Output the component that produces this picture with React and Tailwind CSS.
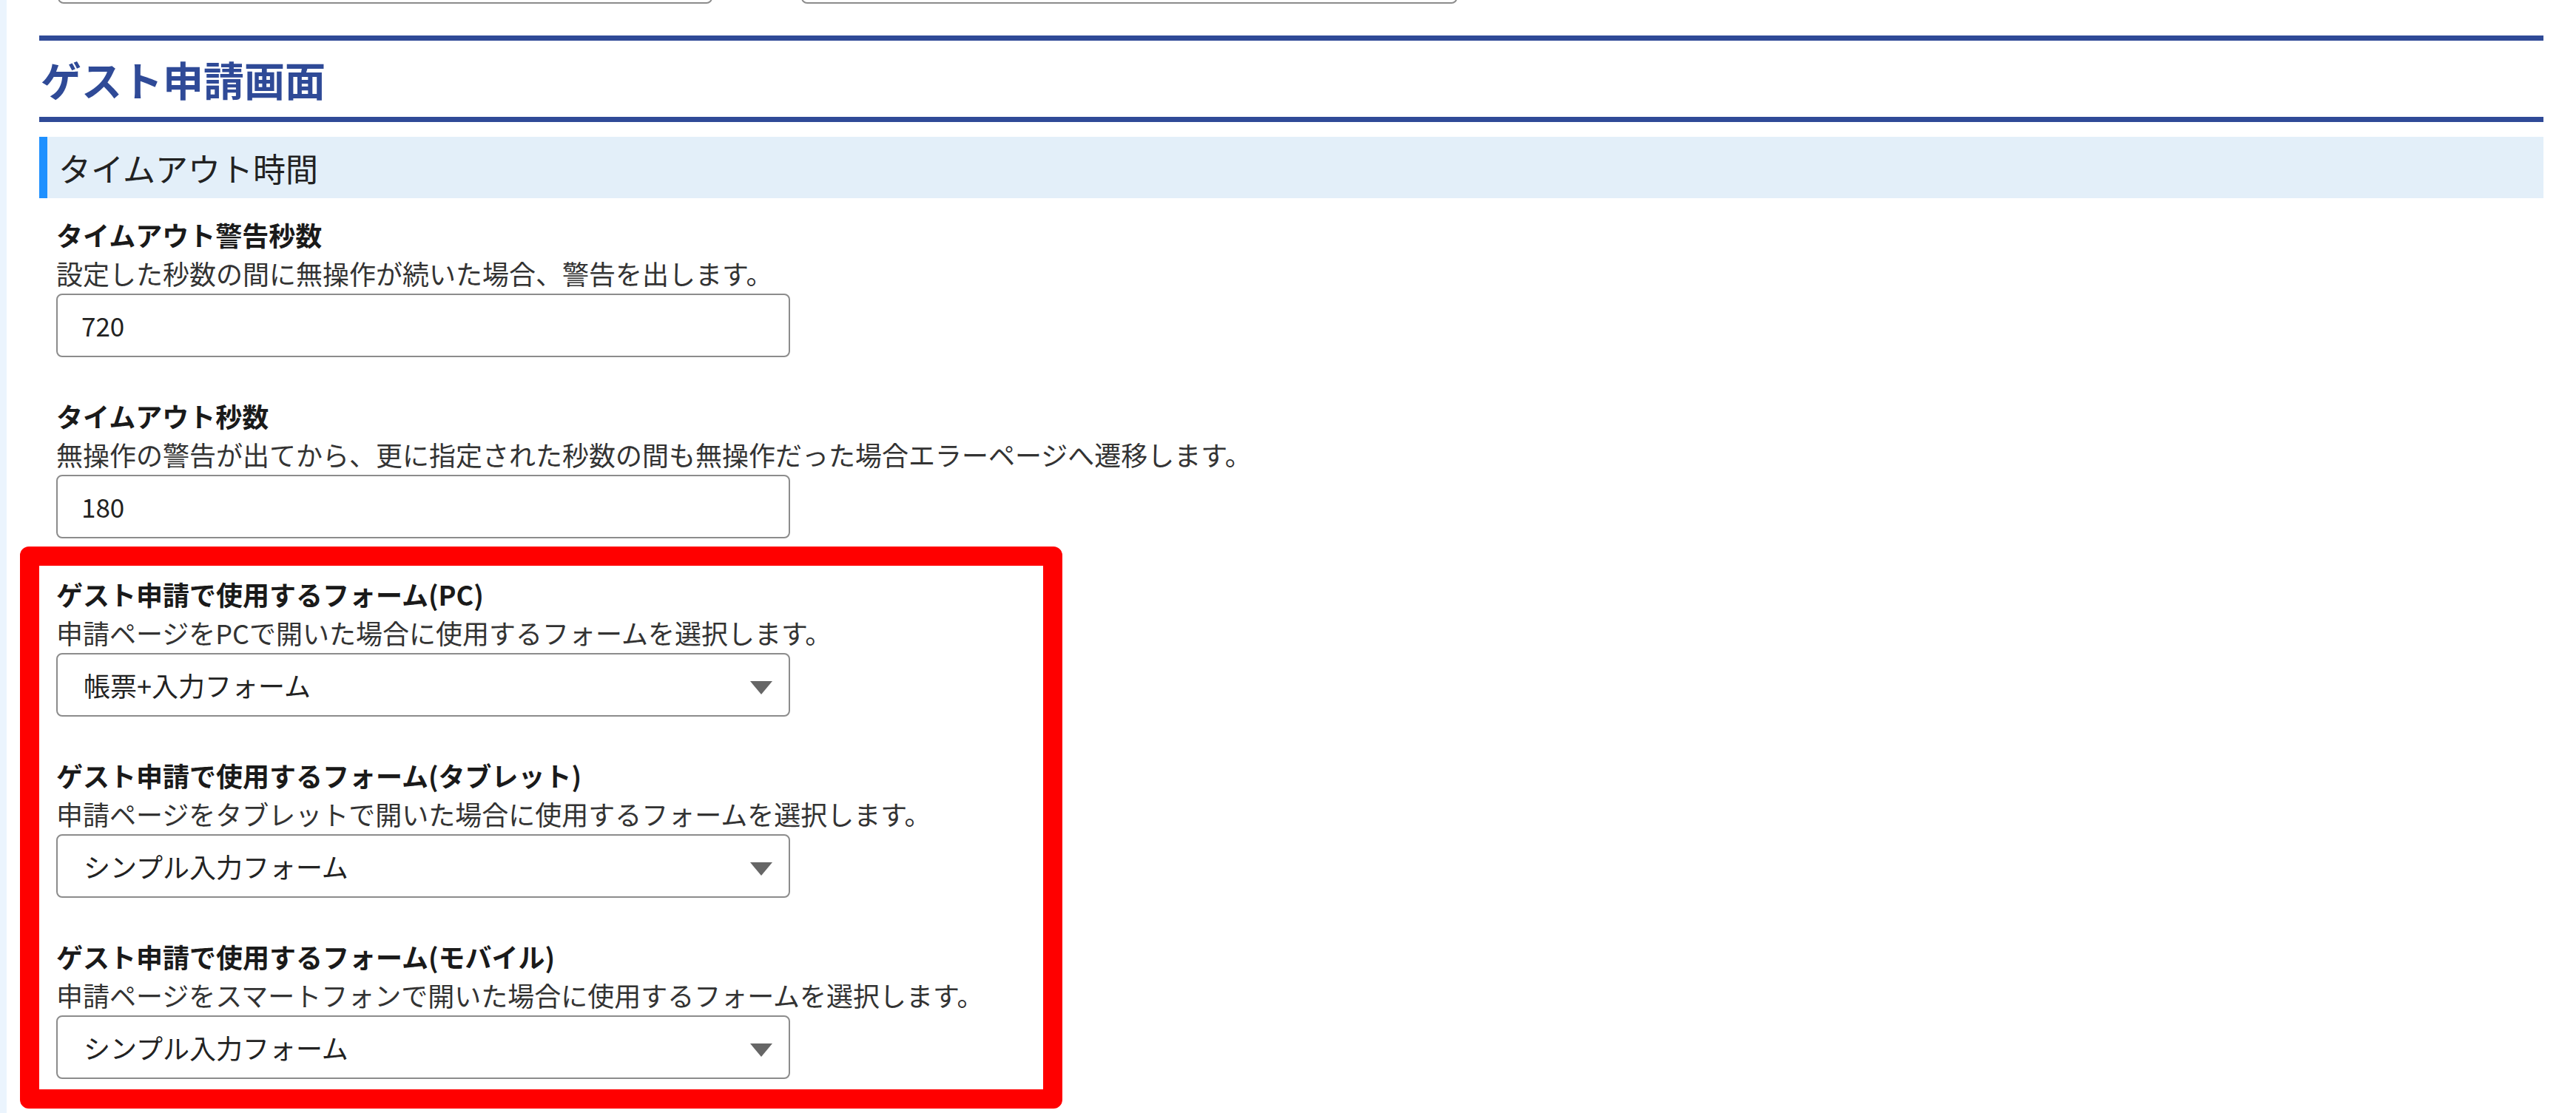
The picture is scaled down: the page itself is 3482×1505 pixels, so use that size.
import React from 'react';

const FIELDS_TOP = [
  {
    label: 'タイムアウト警告秒数',
    desc: '設定した秒数の間に無操作が続いた場合、警告を出します。',
    value: '720',
  },
  {
    label: 'タイムアウト秒数',
    desc: '無操作の警告が出てから、更に指定された秒数の間も無操作だった場合エラーページへ遷移します。',
    value: '180',
  },
];

const FIELDS_FORM = [
  {
    label: 'ゲスト申請で使用するフォーム(PC)',
    desc: '申請ページをPCで開いた場合に使用するフォームを選択します。',
    value: '帳票+入力フォーム',
  },
  {
    label: 'ゲスト申請で使用するフォーム(タブレット)',
    desc: '申請ページをタブレットで開いた場合に使用するフォームを選択します。',
    value: 'シンプル入力フォーム',
  },
  {
    label: 'ゲスト申請で使用するフォーム(モバイル)',
    desc: '申請ページをスマートフォンで開いた場合に使用するフォームを選択します。',
    value: 'シンプル入力フォーム',
  },
];

function Field({ label, desc, children, className = '' }) {
  return (
    <div className={`pl-[23px] ${className}`}>
      <div className="text-[36px] leading-[50px] font-bold text-[#1a1a1a] -mt-[2px] mb-[2px]">{label}</div>
      <div className="text-[36px] leading-[50px] text-[#333]">{desc}</div>
      <div className="mt-[3px]">{children}</div>
    </div>
  );
}

function TextBox({ value }) {
  return (
    <div className="w-[992px] h-[86px] border-2 border-[#8c8c8c] rounded-[8px] bg-white flex items-center pl-[32px] text-[35px] text-[#222]">
      {value}
    </div>
  );
}

function SelectBox({ value }) {
  return (
    <div className="w-[992px] h-[86px] border-2 border-[#8c8c8c] rounded-[8px] bg-white flex items-center justify-between pl-[35px] pr-[22px] text-[36px] text-[#222]">
      <span>{value}</span>
      <svg width="30" height="18" viewBox="0 0 30 18" className="mt-[8px]">
        <path d="M0 0 H30 L15 18 Z" fill="#666" />
      </svg>
    </div>
  );
}

export default function App() {
  return (
    <div className="flex min-h-screen bg-white font-['Noto_Sans_CJK_JP','Noto_Sans',sans-serif]">
      {/* side edge */}
      <div className="w-[9px] shrink-0 bg-[#ebf4fd]" />

      <main className="flex-1 pl-[44px] pr-[44px]">
        {/* bottoms of the inputs above */}
        <div className="h-[5px] overflow-hidden flex items-end gap-[120px] pl-[25px]">
          <div className="w-[885px] h-[60px] shrink-0 border-2 border-[#8c8c8c] rounded-[8px]" />
          <div className="w-[887px] h-[60px] shrink-0 border-2 border-[#8c8c8c] rounded-[8px]" />
        </div>

        {/* page heading */}
        <div className="mt-[43px] h-[117px] border-y-[7px] border-[#2f4a97] flex items-center pl-[2px] text-[55px] leading-none font-bold text-[#2f4a97]">
          ゲスト申請画面
        </div>

        {/* section header */}
        <div className="mt-[20px] h-[83px] border-l-[11px] border-[#1e90ff] bg-[#e3eff9] flex items-center pl-[15px] text-[44px] text-[#222]">
          タイムアウト時間
        </div>

        <div className="pt-[26px]">
          <Field {...FIELDS_TOP[0]} className="mb-[56px]">
            <TextBox value={FIELDS_TOP[0].value} />
          </Field>
          <Field {...FIELDS_TOP[1]} className="mb-[11px]">
            <TextBox value={FIELDS_TOP[1].value} />
          </Field>

          {/* highlighted group */}
          <div className="-ml-[26px] w-[1409px] border-[26px] border-[#ff0000] rounded-[12px] pt-[15px] pb-[14px]">
            {FIELDS_FORM.map((f, i) => (
              <Field key={f.label} label={f.label} desc={f.desc} className={i < FIELDS_FORM.length - 1 ? 'mb-[56px]' : ''}>
                <SelectBox value={f.value} />
              </Field>
            ))}
          </div>
        </div>
      </main>
    </div>
  );
}
